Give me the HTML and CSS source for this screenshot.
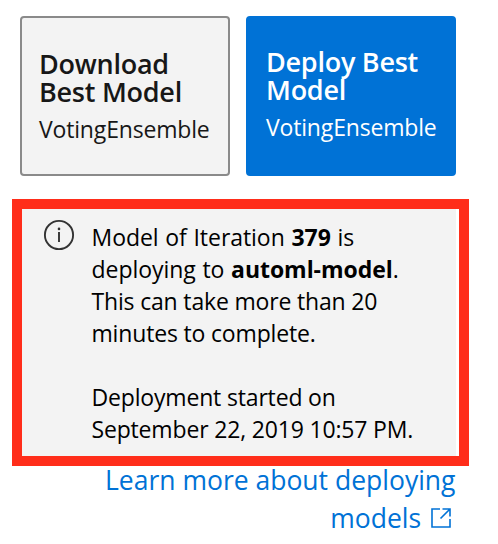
FILE: index.html
```
<!DOCTYPE html>
<html lang="en">
<head>
<meta charset="utf-8">
<title>Deploy model</title>
<link rel="stylesheet" href="styles.css">
</head>
<body>
<main class="panel">
  <div class="actions">
    <button class="action action-download">
      <span class="action-title">Download<br>Best Model</span>
      <span class="action-sub">VotingEnsemble</span>
    </button>
    <button class="action action-deploy">
      <span class="action-title">Deploy Best<br>Model</span>
      <span class="action-sub">VotingEnsemble</span>
    </button>
  </div>
  <section class="highlight">
    <div class="notice">
      <svg class="info-icon" viewBox="0 0 32 32" aria-hidden="true">
        <circle cx="16" cy="16" r="14.1" fill="none" stroke="#333" stroke-width="1.9"/>
        <path d="M16 13v10" stroke="#333" stroke-width="1.9"/>
        <circle cx="16" cy="9.9" r="1.3" fill="#333"/>
      </svg>
      <div class="notice-text">
        <p><span class="wide">Model of Iteration <b>379</b> is<br>deploying to <b>automl-model</b>.</span><br>This can take more than 20<br>minutes to complete.</p>
        <p>Deployment started on<br>September 22, 2019 10:57 PM.</p>
      </div>
    </div>
  </section>
  <a class="learn-more">Learn more about deploying<br>models
    <svg class="link-icon" viewBox="0 0 22 22" aria-hidden="true">
      <path d="M10 2H2v18h18v-8M12.500 2H20v7.500M20 2l-9.500 9.500" fill="none" stroke="#0072d6" stroke-width="1.6"/>
    </svg></a>
</main>
</body>
</html>
```

FILE: styles.css
```
* { box-sizing: border-box; }

body {
  margin: 0;
  background: #fff;
  color: #000;
  font-family: "Open Sans", "Liberation Sans", sans-serif;
}

.panel { padding: 16px 29px 0 12px; }

.actions {
  display: flex;
  gap: 16px;
  padding-left: 8px;
}

.action {
  display: flex;
  flex-direction: column;
  justify-content: flex-start;
  align-items: flex-start;
  flex: none;
  width: 210px;
  height: 160px;
  border: 2px solid #8a8a8a;
  border-radius: 4px;
  padding: 32px 0 0 17px;
  font: inherit;
  text-align: left;
  white-space: nowrap;
}

.action-download { background: #f3f3f3; color: #171717; }

.action-deploy {
  background: #0072d6;
  border-color: #0072d6;
  color: #fff;
  padding: 30px 0 0 18px;
}

.action-title {
  font-size: 27px;
  font-weight: 600;
  line-height: 28px;
  letter-spacing: -0.25px;
}

.action-sub {
  margin-top: 7px;
  font-size: 23px;
  line-height: 32px;
  letter-spacing: -0.17px;
}

.highlight {
  width: 457px;
  height: 267px;
  margin-top: 23px;
  border: 10px solid #ff2d1a;
  padding-right: 3px;
}

.notice {
  display: flex;
  gap: 16.5px;
  height: 100%;
  padding: 12px 0 0 21px;
  background: #f3f3f3;
}

.info-icon {
  flex: none;
  width: 32px;
  height: 32px;
  margin-top: -2px;
}

.notice-text {
  font-size: 23px;
  line-height: 32px;
  letter-spacing: -0.17px;
  white-space: nowrap;
}

.notice-text p { margin: 0 0 32px; }
.notice-text .wide { letter-spacing: -0.05px; word-spacing: 0.8px; }

.learn-more {
  display: block;
  margin: -5px 13.5px 0 0;
  color: #0072d6;
  font-size: 26.5px;
  line-height: 38px;
  text-align: right;
  white-space: nowrap;
}

.link-icon {
  width: 22px;
  height: 22px;
  margin: 0 3.5px 0 2px;
  vertical-align: -1px;
}
```
